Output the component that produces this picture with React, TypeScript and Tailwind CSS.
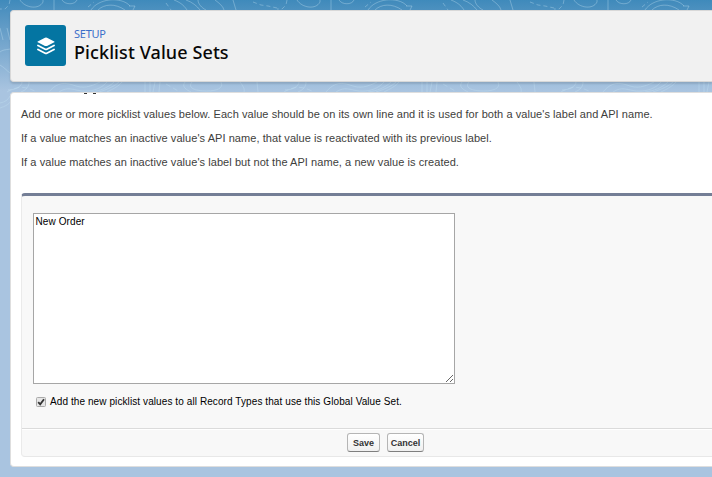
import React from "react";

const paragraphs = [
  "Add one or more picklist values below. Each value should be on its own line and it is used for both a value's label and API name.",
  "If a value matches an inactive value's API name, that value is reactivated with its previous label.",
  "If a value matches an inactive value's label but not the API name, a new value is created.",
];

function Contours() {
  return (
    <svg className="absolute inset-0" width="712" height="130" fill="none" stroke="#c2e2f2" strokeOpacity=".36">
      <defs>
        <pattern id="topo" x="0" y="0" width="277" height="130" patternUnits="userSpaceOnUse">
          <path d="M20 0c5 8 19 10 23 2l0-2M62 0c3 5 13 5 15 0M54 0v10M91 10c4-6 11-9 18-10 8-1 17 1 21 6M98 10c6-6 17-7 27 0M129 6h6l-2 4M174 0c8 3 11 7 13 10M186 0c6 2 11 6 14 10M198 0c0 4 4 8 8 10M215 0c4 3 8 6 9 10M233 0c1 3 2 7 3 10" />
          <path d="M22 82c0 4-6 8-14 8M29 82c0 5-3 8-8 10M49 92c6-7 12-11 24-7 10 4 17 2 27-3M59 92c9-6 14-2 23-1 11 1 20-3 25-9M91 92c8-1 17-4 23-10M99 92c9-3 16-6 20-10M107 92c6-3 12-6 15-10M145 82v10M150 82v10M155 82l-2 10M160 82l-1 10M192 82c-5 6 3 9 15 9 10 0 17-3 14-9M185 82c-4 5 2 8 6 10M240 82c3 4 5 7 4 10M257 82l1 10" />
          <path d="M7 92c12-7 19-5 28-1M166 84l14 8" strokeDasharray="5 3" />
          <path d="M10 0l-1 5-4 4H0M253 2l8 3 7 1 9 2M88 7l6-5M166 3l5 7" strokeDasharray="4 3" />
          <path d="M0 28l3 12M7 28l3 12M0 52c4-3 7-2 10-3M0 65c5 3 7 6 10 8M0 103c5-1 8-3 10-7M0 108c6-2 9-4 10-6" />
        </pattern>
      </defs>
      <rect width="712" height="110" fill="url(#topo)" stroke="none" />
    </svg>
  );
}

const button =
  "h-[19px] rounded-[3px] border border-[#b5b5b5] border-b-[#7f7f7f] bg-linear-to-b from-white to-[#f0f0f0] text-[9px] leading-[18px] font-bold text-[#333]";

export default function App() {
  return (
    <div className="relative h-[477px] w-[712px] overflow-hidden bg-[#a9c4e0] bg-linear-to-b from-[#3f8abb] from-0% via-[#a9c4e0] via-[19%] to-[#a9c4e0] font-['Liberation_Sans',Arial,sans-serif]">
      <Contours />
      <div className="relative flex flex-col gap-[10px] pt-[10px] pl-[10px]">
        <header className="flex h-[72px] gap-2 rounded-l border border-r-0 border-[#d8d8d8] bg-[#f1f1f1] pt-[14px] pl-[14px] shadow-[0_2px_2px_rgba(0,0,0,0.12)]">
          <div className="flex size-[41px] items-center justify-center rounded-[3px] bg-[#0475a2]">
            <svg width="18" height="18" viewBox="0 0 18 18" fill="#fff">
              <path d="M9 .5Q9.400 .5 10 .8L17.300 4.400Q18 4.800 17.300 5.200L10 8.900Q9 9.300 8 8.900L.7 5.200Q0 4.800 .7 4.400L8 .8Q8.600 .5 9 .5Z" />
              <path d="M1 8.500l7.200 3.700q.8.400 1.600 0L17 8.500M1 12.500l7.200 3.700q.8.400 1.600 0L17 12.500" fill="none" stroke="#fff" strokeWidth="1.800" strokeLinecap="round" />
            </svg>
          </div>
          <div className="whitespace-nowrap font-['Noto_Sans','Open_Sans',sans-serif]">
            <p className="pt-[2px] text-[11px] leading-[14px] tracking-[-0.25px] text-[#3b6fc9]">SETUP</p>
            <h1 className="text-[18px] leading-[23px] font-medium tracking-[0.1px] text-[#080707]">Picklist Value Sets</h1>
          </div>
        </header>
        <main className="relative h-[375px] rounded-l border border-r-0 border-[#dedede] bg-white pl-[10px]">
          <div className="absolute top-0 left-[73px] flex h-px gap-[6px]">
            <i className="w-[3px] bg-[#333]" />
            <i className="w-[3px] bg-[#333]" />
          </div>
          <div className="h-[100px] pt-[9px] text-[11px] leading-6 tracking-[0.06px] whitespace-nowrap text-[#3e3e3c]">
            {paragraphs.map((text) => (
              <p key={text}>{text}</p>
            ))}
          </div>
          <section className="h-[264px] rounded-[4px] rounded-r-none border-t-[3px] border-b border-l border-t-[#747e96] border-b-[#e8e8e8] border-l-[#eaeaea] bg-[#f8f8f8]">
            <div className="h-[233px] border-b border-[#dbdbdb] pt-[17px] pl-[11px]">
              <textarea
                className="block h-[171px] w-[422px] resize border border-[#a6a6a6] bg-white px-[1.5px] py-[2px] text-[10px] leading-[12px] tracking-[0.1px] text-black outline-none"
                defaultValue="New Order"
              />
              <label className="mt-[11px] flex h-[14px] items-center gap-1 pl-[3px] text-[10px] leading-[12px] tracking-[0.09px] whitespace-nowrap text-black">
                <svg width="10" height="12" viewBox="0 0 10 12">
                  <rect x=".5" y="1.500" width="9" height="9" rx="1" fill="#e6e6e6" stroke="#aaa" />
                  <path d="M2.200 6.200l2 2.200L8 3.300" fill="none" stroke="#333" strokeWidth="1.800" />
                </svg>
                <span className="-mt-px">Add the new picklist values to all Record Types that use this Global Value Set.</span>
              </label>
            </div>
            <div className="flex h-[27px] gap-[7px] border-t border-white pt-[3px] pl-[325px]">
              <button className={`${button} w-[33px]`}>Save</button>
              <button className={`${button} w-[37px]`}>Cancel</button>
            </div>
          </section>
        </main>
      </div>
    </div>
  );
}
